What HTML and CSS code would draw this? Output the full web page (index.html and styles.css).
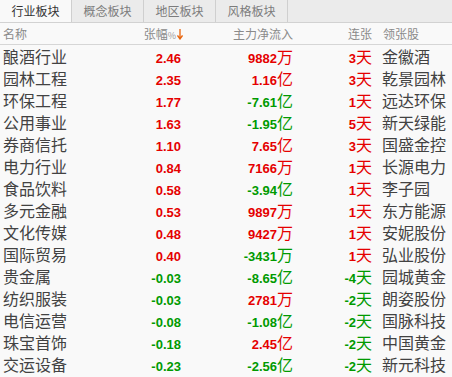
FILE: index.html
```html
<!DOCTYPE html>
<html lang="zh-CN">
<head>
<meta charset="utf-8">
<link rel="stylesheet" href="styles.css">
</head>
<body>
<div class="tabs">
  <div class="tab active">行业板块</div>
  <div class="tab">概念板块</div>
  <div class="tab">地区板块</div>
  <div class="tab">风格板块</div>
  <div class="tab-fill"></div>
</div>
<div class="grid head">
  <div class="c1">名称</div>
  <div class="c2 hchg">张幅<span class="pct">%</span><svg class="arrow" width="6" height="11" viewBox="0 0 6 11"><path d="M3 0V9.5M0.5 6.5L3 10L5.5 6.5" fill="none" stroke="#e8650f" stroke-width="1.3"/></svg></div>
  <div class="c3">主力净流入</div>
  <div class="c4">连张</div>
  <div class="c5">领张股</div>
</div>
<div class="body">
  <div class="grid row"><div class="c1">酿酒行业</div><div class="c2 num up">2.46</div><div class="c3 num up">9882<span class="u">万</span></div><div class="c4 num up">3<span class="u">天</span></div><div class="c5">金徽酒</div></div>
  <div class="grid row"><div class="c1">园林工程</div><div class="c2 num up">2.35</div><div class="c3 num up">1.16<span class="u">亿</span></div><div class="c4 num up">3<span class="u">天</span></div><div class="c5">乾景园林</div></div>
  <div class="grid row"><div class="c1">环保工程</div><div class="c2 num up">1.77</div><div class="c3 num dn">-7.61<span class="u">亿</span></div><div class="c4 num up">1<span class="u">天</span></div><div class="c5">远达环保</div></div>
  <div class="grid row"><div class="c1">公用事业</div><div class="c2 num up">1.63</div><div class="c3 num dn">-1.95<span class="u">亿</span></div><div class="c4 num up">5<span class="u">天</span></div><div class="c5">新天绿能</div></div>
  <div class="grid row"><div class="c1">券商信托</div><div class="c2 num up">1.10</div><div class="c3 num up">7.65<span class="u">亿</span></div><div class="c4 num up">3<span class="u">天</span></div><div class="c5">国盛金控</div></div>
  <div class="grid row"><div class="c1">电力行业</div><div class="c2 num up">0.84</div><div class="c3 num up">7166<span class="u">万</span></div><div class="c4 num up">1<span class="u">天</span></div><div class="c5">长源电力</div></div>
  <div class="grid row"><div class="c1">食品饮料</div><div class="c2 num up">0.58</div><div class="c3 num dn">-3.94<span class="u">亿</span></div><div class="c4 num up">1<span class="u">天</span></div><div class="c5">李子园</div></div>
  <div class="grid row"><div class="c1">多元金融</div><div class="c2 num up">0.53</div><div class="c3 num up">9897<span class="u">万</span></div><div class="c4 num up">1<span class="u">天</span></div><div class="c5">东方能源</div></div>
  <div class="grid row"><div class="c1">文化传媒</div><div class="c2 num up">0.48</div><div class="c3 num up">9427<span class="u">万</span></div><div class="c4 num up">1<span class="u">天</span></div><div class="c5">安妮股份</div></div>
  <div class="grid row"><div class="c1">国际贸易</div><div class="c2 num up">0.40</div><div class="c3 num dn">-3431<span class="u">万</span></div><div class="c4 num up">1<span class="u">天</span></div><div class="c5">弘业股份</div></div>
  <div class="grid row"><div class="c1">贵金属</div><div class="c2 num dn">-0.03</div><div class="c3 num dn">-8.65<span class="u">亿</span></div><div class="c4 num dn">-4<span class="u">天</span></div><div class="c5">园城黄金</div></div>
  <div class="grid row"><div class="c1">纺织服装</div><div class="c2 num dn">-0.03</div><div class="c3 num up">2781<span class="u">万</span></div><div class="c4 num dn">-2<span class="u">天</span></div><div class="c5">朗姿股份</div></div>
  <div class="grid row"><div class="c1">电信运营</div><div class="c2 num dn">-0.08</div><div class="c3 num dn">-1.08<span class="u">亿</span></div><div class="c4 num dn">-2<span class="u">天</span></div><div class="c5">国脉科技</div></div>
  <div class="grid row"><div class="c1">珠宝首饰</div><div class="c2 num dn">-0.18</div><div class="c3 num up">2.45<span class="u">亿</span></div><div class="c4 num dn">-2<span class="u">天</span></div><div class="c5">中国黄金</div></div>
  <div class="grid row"><div class="c1">交运设备</div><div class="c2 num dn">-0.23</div><div class="c3 num dn">-2.56<span class="u">亿</span></div><div class="c4 num dn">-2<span class="u">天</span></div><div class="c5">新元科技</div></div>
</div>
</body>
</html>
```

FILE: styles.css
```css
html, body {
  margin: 0;
  padding: 0;
  background: #f9f9f9;
  font-family: "Noto Sans CJK SC", "Noto Sans", sans-serif;
  overflow: hidden;
}
.tabs {
  display: flex;
  height: 22px;
  border-bottom: 1px solid #d2d2d2;
  background: #ebebeb;
}
.tab {
  width: 71px;
  border-right: 1px solid #cfcfcf;
  font-size: 12px;
  line-height: 22px;
  text-align: center;
  color: #7c7c7c;
}
.tab.active {
  background: #f9f9f9;
  color: #333;
}
.tab-fill { flex: 1; }
.grid {
  display: grid;
  grid-template-columns: 128px 50px 112px 79px 1fr;
  padding-left: 3px;
  align-items: baseline;
}
.head {
  height: 21px;
  line-height: 21px;
  font-size: 12px;
  color: #8a8a8a;
  border-bottom: 1px solid #d6d6d6;
}
.c2, .c3, .c4 { text-align: right; }
.c5 { padding-left: 10px; }
.head .c5 { padding-left: 11px; }
.hchg { margin-right: -2px; }
.pct { font-size: 9px; color: #999; }
.arrow { vertical-align: -1px; margin-left: 1px; }
.row {
  height: 22px;
  line-height: 22px;
  font-size: 16px;
  color: #424242;
}
.num {
  font-family: "Liberation Sans", Arial, sans-serif;
  font-weight: bold;
  font-size: 13px;
}
.num .u {
  font-family: "Noto Sans CJK SC", sans-serif;
  font-weight: normal;
  font-size: 16px;
}
.up { color: #e50000; }
.dn { color: #009a00; }
```
